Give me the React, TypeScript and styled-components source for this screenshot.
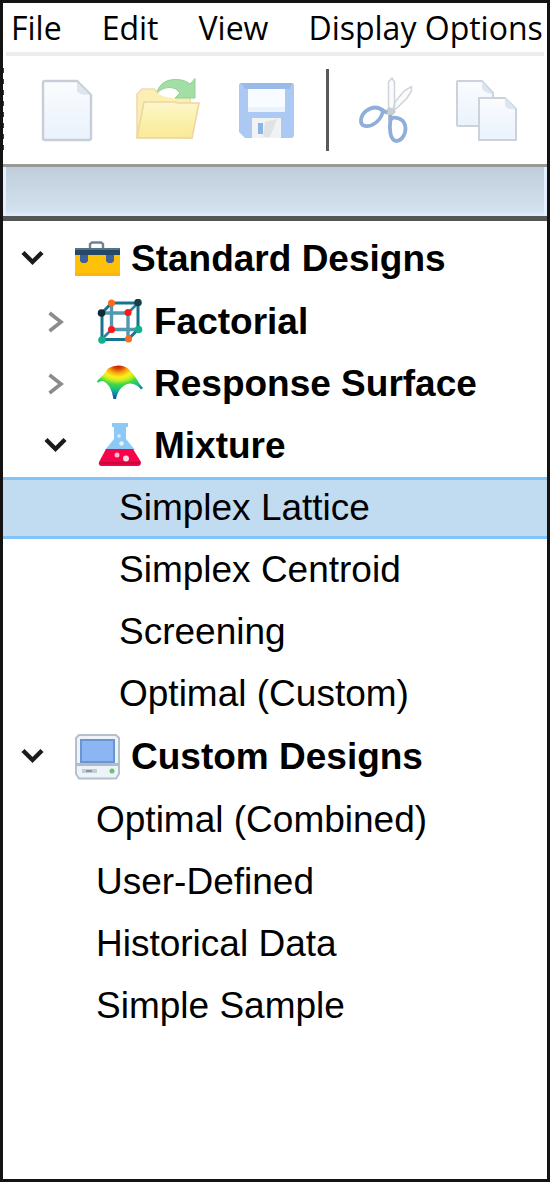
import React, { useState } from 'react';
import styled, { createGlobalStyle } from 'styled-components';

const Global = createGlobalStyle`
  *, *::before, *::after { box-sizing: border-box; }
  body { margin: 0; background: #fff; }
  button { font: inherit; color: inherit; background: none; border: 0; padding: 0; margin: 0; text-align: left; }
  ul { list-style: none; margin: 0; padding: 0; }
  svg { display: block; flex: none; }
`;

const Window = styled.div`
  display: flex;
  flex-direction: column;
  min-height: 100vh;
  overflow: hidden;
  background: #fff;
  color: #000;
  border: 3px solid #141212;
`;

const MenuBar = styled.nav`
  display: flex;
  gap: 40px;
  height: 53px;
  margin: 0 3px;
  padding-left: 5px;
  border-bottom: 4px solid #ececec;
  font-family: 'Open Sans', 'Noto Sans', sans-serif;
  font-size: 32px;
  line-height: 50px;
  white-space: nowrap;
`;

const MenuButton = styled.button`
  flex: none;
`;

const ToolBar = styled.div`
  display: flex;
  align-items: center;
  height: 108px;
`;

const Grip = styled.div`
  flex: none;
  width: 1px;
  height: 84px;
  margin-right: 35px;
  background: repeating-linear-gradient(#3c3c3c 0 5px, #ffffff 5px 11px);
`;

const ToolButton = styled.button<{ $gap: number }>`
  flex: none;
  margin-right: ${p => p.$gap}px;
`;

const Separator = styled.div`
  flex: none;
  width: 3px;
  height: 82px;
  margin-right: 28px;
  background: #5a5a5a;
`;

const Band = styled.div`
  height: 57px;
  border-top: 3px solid #999a98;
  border-bottom: 5px solid #555656;
  background: linear-gradient(#c0cddb, #d3e0ee 88%, #dfefff);
  box-shadow: inset 3px 0 #e2f0ff, inset -3px 0 #e2f0ff;
`;

const Tree = styled.ul`
  flex: 1;
  padding-top: 6px;
  font-family: 'Liberation Sans', Arial, sans-serif;
  font-size: 37px;
  line-height: 56px;
  white-space: nowrap;
`;

const BranchRow = styled.button<{ $level: number }>`
  display: flex;
  align-items: center;
  width: 100%;
  height: ${p => (p.$level === 0 ? 64 : 62)}px;
  padding-left: ${p => (p.$level === 0 ? 15 : 38)}px;
  font-weight: bold;
`;

const BranchIcon = styled.span`
  margin: 0 11px 0 28px;
`;

const LeafRow = styled.button<{ $level: number; $selected: boolean }>`
  display: block;
  width: 100%;
  height: 62px;
  padding-left: ${p => (p.$level === 1 ? 93 : 116)}px;
  border: solid ${p => (p.$selected ? '#84c3f7' : 'transparent')};
  border-width: 3px 0;
  background: ${p => (p.$selected ? '#c1dbf1' : 'transparent')};
`;

function Chevron({ open }: { open: boolean }) {
  return (
    <svg width="28" height="28" viewBox="0 0 28 28" fill="none" aria-hidden="true">
      {open
        ? <path d="M5 7.500 L14.500 17 L24 7.500" stroke="#1b1b1b" strokeWidth="4.400" />
        : <path d="M8.500 5 L20 14 L8.500 23" stroke="#8c8c8c" strokeWidth="3.600" />}
    </svg>
  );
}

function NewIcon() {
  return (
    <svg width="56" height="68" viewBox="40 76 56 68" aria-hidden="true">
      <defs>
        <linearGradient id="page" x1="0" y1="0" x2="0" y2="1">
          <stop offset="0" stopColor="#fbfcfe" />
          <stop offset="1" stopColor="#eaf2fc" />
        </linearGradient>
      </defs>
      <path d="M46 81H78L92 95V138Q92 140 90 140H46Q44 140 44 138V83Q44 81 46 81Z" fill="url(#page)" stroke="#c8ced6" strokeWidth="2.4" />
      <path d="M78 82V91Q79 95 91 95Z" fill="#dce6f1" />
    </svg>
  );
}

function OpenIcon() {
  return (
    <svg width="68" height="68" viewBox="134 76 68 68" aria-hidden="true">
      <defs>
        <linearGradient id="folder" x1="0" y1="0" x2="0" y2="1">
          <stop offset="0" stopColor="#fdf6cd" />
          <stop offset="0.5" stopColor="#fbf1ac" />
          <stop offset="1" stopColor="#fae999" />
        </linearGradient>
      </defs>
      <path d="M137 138V94L142 89H154L158 93H190V101L192 138Z" fill="#fbefb4" stroke="#efdcae" strokeWidth="1.6" />
      <path d="M137 137.500L144 102H175L178 103H199L192 138Z" fill="url(#folder)" stroke="#ecd6a2" strokeWidth="1.6" />
      <path d="M158 94Q168 85 177 89Q180 91 180 95L176 98Q166 98 158 94Z" fill="#fff" />
      <path d="M157 92Q161 80 174 79.500Q184 79 190 84L195 78.500V98H175L180 93Q172 82 157 92Z" fill="#a3dfa5" stroke="#8fd295" strokeWidth="1" />
    </svg>
  );
}

function SaveIcon() {
  return (
    <svg width="60" height="68" viewBox="237 76 60 68" aria-hidden="true">
      <path d="M241 83H292Q294 83 294 85V135Q294 138 291 138H245L239 132V85Q239 83 241 83Z" fill="#abc9f3" />
      <path d="M241 83H292L290 89H245Z" fill="#98bbe8" />
      <path d="M248 89H285V112H248Z" fill="#f8fbff" />
      <path d="M248 107H285V112H248Z" fill="#eaf2fb" />
      <path d="M252 118H281V138H252Z" fill="#f1f2f4" />
      <path d="M265 122L277 119L270 137H263Z" fill="#e0e2e4" />
      <path d="M258 123H263V134H258Z" fill="#8bb3e8" />
    </svg>
  );
}

function CutIcon() {
  return (
    <svg width="58" height="70" viewBox="358 75 58 70" aria-hidden="true">
      <path d="M389.500 109V82L393 78L395.500 82V103L394 110Z" fill="#fafbfc" stroke="#d0d3d8" strokeWidth="1.500" />
      <path d="M395 110L396 102L405 91L412.500 86.500V91L408 98L399 107Z" fill="#fafbfc" stroke="#d0d3d8" strokeWidth="1.500" />
      <path d="M386 111L390 107L395 109L397 112L393 116L388 115Z" fill="#c9ced4" />
      <g fill="none" stroke="#90aed8" strokeWidth="3.800">
        <path d="M384 111C382 121 373 127 366 126C360 125 361 116 367 111C374 106 380 107 384 111Z" />
        <path d="M391.500 119C395 116 404 118 406 125C408 133 403 141 397 141C391 140 390 129 391.500 119Z" />
        <path d="M382 109L388 113M391 115L391.500 121" />
      </g>
    </svg>
  );
}

function CopyIcon() {
  return (
    <svg width="66" height="68" viewBox="455 76 66 68" aria-hidden="true">
      <g fill="url(#page)" stroke="#ccd2da" strokeWidth="2">
        <path d="M459 81H483L494 93V126H459Q458 126 458 125V82Q458 81 459 81Z" />
        <path d="M483 81V88Q485 93 494 94Z" fill="#d9e5ef" stroke="none" />
        <path d="M480 98H506L517 109V140H480Z" />
        <path d="M506 98V106Q508 110 517 109Z" fill="#dae7f2" stroke="none" />
      </g>
    </svg>
  );
}

function ToolboxIcon() {
  return (
    <svg width="46" height="46" viewBox="73 235 46 46" aria-hidden="true">
      <path d="M89 248V243L91 241.500H100L102 243V248" fill="none" stroke="#6c8492" strokeWidth="2.400" />
      <path d="M74 247H119V275H74Z" fill="#ffc107" />
      <path d="M74 272H119V275H74Z" fill="#fbb512" />
      <path d="M74 247H119V254H74Z" fill="#264765" />
      <path d="M74 247H119V249H74Z" fill="#557387" />
      <path d="M79 254H87V260L85 262H81L79 260ZM105 254H113V260L111 262H107L105 260Z" fill="#3c609a" />
    </svg>
  );
}

function CubeIcon() {
  return (
    <svg width="46" height="46" viewBox="96 298 46 46" aria-hidden="true">
      <g fill="none">
        <path d="M110.500 302V328.500H137M101 312H127V338M110.500 312V328.500" stroke="#5298b2" strokeWidth="3.400" />
        <path d="M110.500 328.500L101 338M127 312L137 302" stroke="#2c8098" strokeWidth="2.600" />
        <path d="M101 338.500V312L110.500 302H137V328.500L127 338.500Z" stroke="#16748f" strokeWidth="3" />
      </g>
      <g>
        <circle cx="110.500" cy="302" r="3.500" fill="#ff6a1a" />
        <circle cx="137" cy="301.500" r="3.800" fill="#183e4c" />
        <circle cx="100.500" cy="312" r="3.800" fill="#102b36" />
        <circle cx="127" cy="311.500" r="3.500" fill="#ff1616" />
        <circle cx="110.500" cy="328.500" r="3.500" fill="#ff1616" />
        <circle cx="137.500" cy="328.500" r="3.800" fill="#13b08b" />
        <circle cx="101" cy="339" r="3.800" fill="#13b08b" />
        <circle cx="127.500" cy="338" r="3.500" fill="#fb6b22" />
      </g>
    </svg>
  );
}

function SurfaceIcon() {
  return (
    <svg width="46" height="46" viewBox="96 361 46 46" aria-hidden="true">
      <defs>
        <radialGradient id="heat" gradientUnits="userSpaceOnUse" cx="0" cy="0" r="1" gradientTransform="translate(117 365) scale(44 34)">
          <stop offset="0" stopColor="#b81408" />
          <stop offset="0.120" stopColor="#d8480a" />
          <stop offset="0.240" stopColor="#f9a80c" />
          <stop offset="0.360" stopColor="#faf01c" />
          <stop offset="0.460" stopColor="#c4ef24" />
          <stop offset="0.580" stopColor="#3fd648" />
          <stop offset="0.740" stopColor="#13bd83" />
          <stop offset="0.880" stopColor="#0b78b0" />
          <stop offset="1" stopColor="#0c4c9c" />
        </radialGradient>
      </defs>
      <path d="M96 381Q103 375 107 368.500Q112 365.500 117.500 365.500Q123 365.500 127 368.500Q133 374 138 383Q140 386 142 388L140 389.500Q136 384 129 383.500Q118 385 115 399H112.500Q110 384 102 381Q99 380.500 97 383Z" fill="url(#heat)" />
    </svg>
  );
}

function FlaskIcon() {
  return (
    <svg width="46" height="46" viewBox="96 423 46 46" aria-hidden="true">
      <path d="M111 423H127V427H125V439L134 450H104L113 439V427H111Z" fill="#8dc9f7" />
      <path d="M105 449H132L140 462Q140 466 137 466H100Q97 465 98 462Z" fill="#f5064a" />
      <path d="M99 463H139" stroke="#c9093c" strokeWidth="2.400" />
      <circle cx="118" cy="436" r="1.800" fill="#d8efff" />
      <circle cx="120.500" cy="443.500" r="2.200" fill="#e4f4ff" />
      <circle cx="116" cy="455" r="2.500" fill="#ffb5cb" />
      <circle cx="125" cy="458.500" r="3" fill="#ffd9e4" />
    </svg>
  );
}

function ComputerIcon() {
  return (
    <svg width="46" height="46" viewBox="73 734 46 46" aria-hidden="true">
      <path d="M78 735H115L118 738V774L115 778.500H78L75 774V738Z" fill="#eef3f8" stroke="#b4c0cc" strokeWidth="2" />
      <path d="M75 763H118V766H75Z" fill="#aebdcc" />
      <path d="M80 740H113V762H80Z" fill="#8bb6f1" stroke="#6995d3" strokeWidth="2" />
      <path d="M81 771H96" stroke="#c3cdd6" strokeWidth="4" />
      <path d="M85 771H91" stroke="#8498a8" strokeWidth="2" />
      <circle cx="111" cy="771" r="2.500" fill="#6cc176" />
    </svg>
  );
}

type Node = { label: string; icon?: React.ReactNode; open?: boolean; children?: Node[] };

const nodes: Node[] = [
  {
    label: 'Standard Designs', icon: <ToolboxIcon />, open: true, children: [
      { label: 'Factorial', icon: <CubeIcon />, open: false },
      { label: 'Response Surface', icon: <SurfaceIcon />, open: false },
      {
        label: 'Mixture', icon: <FlaskIcon />, open: true, children: [
          { label: 'Simplex Lattice' }, { label: 'Simplex Centroid' }, { label: 'Screening' }, { label: 'Optimal (Custom)' },
        ],
      },
    ],
  },
  {
    label: 'Custom Designs', icon: <ComputerIcon />, open: true, children: [
      { label: 'Optimal (Combined)' }, { label: 'User-Defined' }, { label: 'Historical Data' }, { label: 'Simple Sample' },
    ],
  },
];

type ItemProps = { node: Node; level: number; selected: string; onSelect: (label: string) => void };

function TreeItem({ node, level, selected, onSelect }: ItemProps) {
  const [open, setOpen] = useState(!!node.open);
  if (!node.icon) {
    return (
      <li>
        <LeafRow $level={level} $selected={selected === node.label} aria-pressed={selected === node.label} onClick={() => onSelect(node.label)}>
          {node.label}
        </LeafRow>
      </li>
    );
  }
  return (
    <li>
      <BranchRow $level={level} aria-expanded={open} onClick={() => setOpen(!open)}>
        <Chevron open={open} />
        <BranchIcon>{node.icon}</BranchIcon>
        {node.label}
      </BranchRow>
      {open && node.children && (
        <ul>
          {node.children.map(child => (
            <TreeItem key={child.label} node={child} level={level + 1} selected={selected} onSelect={onSelect} />
          ))}
        </ul>
      )}
    </li>
  );
}

export default function App() {
  const [selected, setSelected] = useState('Simplex Lattice');
  return (
    <Window>
      <Global />
      <MenuBar aria-label="Main menu">
        {['File', 'Edit', 'View', 'Display Options'].map(label => (
          <MenuButton key={label}>{label}</MenuButton>
        ))}
      </MenuBar>
      <ToolBar role="toolbar" aria-label="Tools">
        <Grip />
        <ToolButton $gap={39} aria-label="New"><NewIcon /></ToolButton>
        <ToolButton $gap={35} aria-label="Open"><OpenIcon /></ToolButton>
        <ToolButton $gap={29} aria-label="Save"><SaveIcon /></ToolButton>
        <Separator />
        <ToolButton $gap={39} aria-label="Cut"><CutIcon /></ToolButton>
        <ToolButton $gap={0} aria-label="Copy"><CopyIcon /></ToolButton>
      </ToolBar>
      <Band />
      <Tree aria-label="Designs">
        {nodes.map(node => (
          <TreeItem key={node.label} node={node} level={0} selected={selected} onSelect={setSelected} />
        ))}
      </Tree>
    </Window>
  );
}
